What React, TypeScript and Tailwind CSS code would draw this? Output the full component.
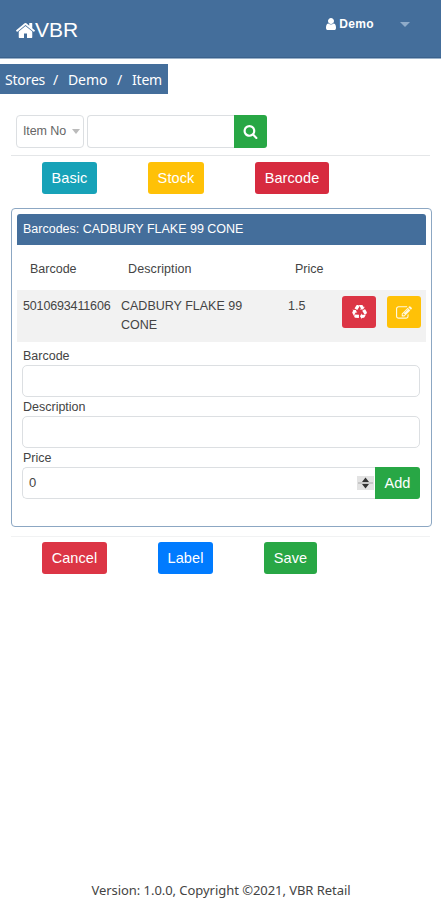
import type { ReactNode } from "react";

function Icon({ d, className }: { d: string; className: string }) {
  return (
    <svg viewBox="0 0 1792 1792" fill="currentColor" className={className}>
      <path d={d} />
    </svg>
  );
}

const home =
  "M1472 992v480q0 26-19 45t-45 19h-384v-384h-256v384h-384q-26 0-45-19t-19-45v-480q0-1 .5-3t.5-3l575-474 575 474q1 2 1 6zm223-69l-62 74q-8 9-21 11h-3q-13 0-21-7l-692-577-692 577q-12 8-24 7-13-2-21-11l-62-74q-8-10-7-23.5t11-21.5l719-599q32-26 76-26t76 26l244 204v-195q0-14 9-23t23-9h192q14 0 23 9t9 23v408l219 182q10 8 11 21.5t-7 23.5z";
const user =
  "M1536 1399q0 109-62.5 187t-150.5 78h-854q-88 0-150.5-78t-62.5-187q0-85 8.5-160.5t31.5-152 58.5-131 94-89 134.5-34.5q131 128 313 128t313-128q76 0 134.5 34.5t94 89 58.5 131 31.5 152 8.5 160.5zm-256-887q0 159-112.5 271.5t-271.5 112.5-271.5-112.5-112.5-271.5 112.5-271.5 271.5-112.5 271.5 112.5 112.5 271.5z";
const search =
  "M1216 832q0-185-131.5-316.5t-316.5-131.5-316.5 131.5-131.5 316.5 131.5 316.5 316.5 131.5 316.5-131.5 131.5-316.5zm512 832q0 52-38 90t-90 38q-54 0-90-38l-343-342q-179 124-399 124-143 0-273.5-55.5t-225-150-150-225-55.5-273.5 55.5-273.5 150-225 225-150 273.5-55.5 273.5 55.5 225 150 150 225 55.5 273.5q0 220-124 399l343 343q37 37 37 90z";
const edit =
  "M888 1184l116-116-152-152-116 116v56h96v96h56zm440-720q-16-16-33 1l-350 350q-17 17-1 33t33-1l350-350q17-17 1-33zm80 594v190q0 119-84.5 203.5t-203.5 84.5h-832q-119 0-203.5-84.5t-84.5-203.5v-832q0-119 84.5-203.5t203.5-84.5h832q63 0 117 25 15 7 18 23 3 17-9 29l-49 49q-14 14-32 8-23-6-45-6h-832q-66 0-113 47t-47 113v832q0 66 47 113t113 47h832q66 0 113-47t47-113v-126q0-13 9-22l64-64q15-15 35-7t20 29zm-96-738l288 288-672 672h-288v-288zm444 132l-92 92-288-288 92-92q28-28 68-28t68 28l152 152q28 28 28 68t-28 68z";
const recycle =
  "M836 1169l-15 368-2 22-420-29q-36-3-67-31.5t-47-65.5q-11-27-14.5-55t4-65 12-55 21.5-64 19-53q78 12 509 28zm-387-586l180 379-147-92q-63 72-111.5 144.5t-72.5 125-39.5 94.5-18.5 63l-4 21-190-357q-17-26-18-56t6-47l8-18q35-63 114-188l-140-86zm1231 517l-188 359q-12 29-36.5 46.5t-43.5 20.5l-18 4q-71 7-219 12l8 164-230-367 211-362 7 173q170 16 283 5t170-33zm-785-924q-47 63-265 435l-317-187-19-12 225-356q20-31 60-45t80-10q24 2 48.5 12t42 21 41.5 33 36 34.5 36 39.5 32 35zm655 307l212 363q18 37 12.5 76t-27.5 74q-13 20-33 37t-38 28-48.5 22-47 16-51.5 14-46 12q-34-72-265-436l313-195zm-143-226l142-83-220 373-419-20 151-86q-34-89-75-166t-75.5-123.5-64.5-80-47-46.5l-17-13 405 1q31-3 58 10.5t39 28.5l11 15q39 61 112 190z";

function Button({ className, children }: { className: string; children: ReactNode }) {
  return (
    <button className={`flex h-8 items-center justify-center rounded-[3px] pt-px text-[14.5px] tracking-[0.1px] text-white ${className}`}>
      {children}
    </button>
  );
}

function Field({ label }: { label: string }) {
  return (
    <label className="block">
      <span className="block h-[19px] pl-px text-[12.5px] leading-[20px]">{label}</span>
      <input className="block h-8 w-full rounded-[5px] border border-[#dcdfe2] px-1.5" />
    </label>
  );
}

export default function App() {
  return (
    <div className="flex h-[900px] w-full flex-col bg-white font-['Liberation_Sans',Arial,sans-serif] text-[13px] text-[#444]">

      {/* Navbar */}
      <header className="flex h-[59px] shrink-0 items-start border-b border-[#9ab1c9] bg-[#446e9b] pl-[15px] text-white shadow-[inset_0_-1px_0_#3a618c]">
        <a className="flex items-center pt-[15px] text-[21px] leading-[30px]">
          <Icon d={home} className="h-[21px] w-[21px]" />
          <span className="-ml-px">VBR</span>
        </a>
        <div className="ml-auto flex items-center pt-[15px] pr-[31px] text-[12px] leading-[18px] font-bold">
          <Icon d={user} className="mr-px h-[14px] w-[14px]" />
          <span className="tracking-[0.35px]">Demo</span>
          <span className="ml-[26px] h-0 w-0 border-x-[5px] border-t-[5px] border-x-transparent border-t-[#8fabc9]" />
        </div>
      </header>

      {/* Breadcrumb */}
      <nav className="mt-[5px] flex h-[30px] w-[168px] shrink-0 items-center gap-[8px] bg-[#446e9b] pl-[5px] font-['Noto_Sans',sans-serif] text-[14px] text-white">
        <span className="w-[40px] tracking-[-0.2px]">Stores</span>
        <span className="w-[7px]">/</span>
        <span className="w-[41px] tracking-[-0.1px]">Demo</span>
        <span className="w-[7px]">/</span>
        <span className="tracking-[-0.2px]">Item</span>
      </nav>

      <main className="px-[11px]">

        {/* Search */}
        <div className="mt-[21px] flex pl-[5px]">
          <div className="mr-[3px] flex h-[33px] w-[68px] items-center justify-between rounded-[4px] border border-[#dcdfe2] pr-[3px] pl-[6px] text-[12.5px] text-[#666]">
            <span className="tracking-[-0.1px]">Item No</span>
            <span className="h-0 w-0 border-x-[4.5px] border-t-[5px] border-x-transparent border-t-[#bbb]" />
          </div>
          <input className="h-[33px] w-[147px] rounded-l-[4px] border border-r-0 border-[#dcdfe2] px-2" />
          <button className="flex h-[33px] w-[33px] items-center justify-center rounded-r-[3px] bg-[#28a745] text-white">
            <Icon d={search} className="h-[15px] w-[15px]" />
          </button>
        </div>

        <div className="mt-[7px] h-px bg-[#e4e6e8]" />

        {/* Tabs */}
        <div className="mt-[6px] flex pl-[31px]">
          <Button className="w-[55px] bg-[#17a2b8]">Basic</Button>
          <Button className="ml-[51px] w-[56px] bg-[#ffc107]">Stock</Button>
          <Button className="ml-[51px] w-[74px] bg-[#d72b3f]">Barcode</Button>
        </div>

        {/* Barcodes */}
        <section className="mt-[14px] h-[319px] w-[421px] rounded-[4px] border border-[#8ca7c3] px-[5px] pt-[5px]">
          <h2 className="flex h-[31px] items-center rounded-t-[3px] bg-[#446e9b] pl-[6px] text-[12.5px] text-white">
            Barcodes: CADBURY FLAKE 99 CONE
          </h2>
          <div className="flex h-[45px] pt-[15px] text-[12.5px] leading-[19px]">
            <span className="w-[99px] pl-[13px]">Barcode</span>
            <span className="w-[166px] pl-[12px] tracking-[0.1px]">Description</span>
            <span className="pl-[13px]">Price</span>
          </div>
          <div className="flex h-[52px] bg-[#f2f2f2] pt-[6px] pl-[6px] text-[12.5px] leading-[19px]">
            <span className="w-[98px] pt-px tracking-[-0.15px]">5010693411606</span>
            <span className="w-[128px] pt-px">CADBURY FLAKE 99 CONE</span>
            <span className="w-[54px] pt-px pl-[39px]">1.5</span>
            <Button className="ml-[39px] w-[34px] bg-[#dc3545]">
              <Icon d={recycle} className="h-[15px] w-[15px]" />
            </Button>
            <Button className="ml-[11px] w-[34px] bg-[#ffc107]">
              <Icon d={edit} className="h-4 w-4 text-[#fff8e0]" />
            </Button>
          </div>

          <div className="pr-[6px] pl-[5px]">
            <div className="mt-[4px]">
              <Field label="Barcode" />
            </div>
            <Field label="Description" />
            <label className="block">
              <span className="block h-[19px] pl-px text-[12.5px] leading-[20px]">Price</span>
              <span className="flex">
                <span className="flex h-8 flex-1 items-center justify-between rounded-l-[5px] border border-r-0 border-[#dcdfe2] pl-[6px]">
                  0
                  <svg viewBox="0 0 17 14" className="mr-px h-[14px] w-[17px]">
                    <rect width="17" height="14" fill="#e3e3e3" />
                    <path d="M1 7h15" stroke="#aaa" />
                    <path d="M5 6l3.5-4.5L12 6zM5 8l3.5 4.5L12 8z" fill="#333" />
                  </svg>
                </span>
                <Button className="w-[45px] rounded-l-none bg-[#28a745]">Add</Button>
              </span>
            </label>
          </div>
        </section>

        <div className="mt-[9px] h-px bg-[#f1f2f3]" />

        {/* Actions */}
        <div className="mt-[5px] flex pl-[31px]">
          <Button className="w-[65px] bg-[#dc3545]">Cancel</Button>
          <Button className="ml-[51px] w-[55px] bg-[#007bff]">Label</Button>
          <Button className="ml-[51px] w-[53px] bg-[#28a745]">Save</Button>
        </div>
      </main>

      <footer className="mt-auto h-[20px] pl-px text-center font-['Noto_Sans',sans-serif] text-[13px] leading-[20px] tracking-[-0.05px]">
        Version: 1.0.0, Copyright ©2021, VBR Retail
      </footer>
    </div>
  );
}
